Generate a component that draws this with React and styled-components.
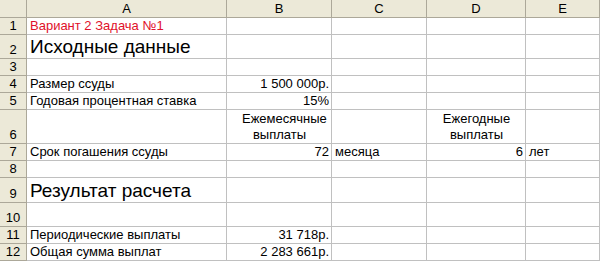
import styled, { createGlobalStyle } from "styled-components";

const GlobalStyle = createGlobalStyle`
  html, body {
    margin: 0;
    padding: 0;
    background: #ffffff;
  }
  body {
    font-family: "Liberation Sans", Arial, sans-serif;
    font-size: 13px;
    color: #000000;
  }
`;

const COLUMNS = ["A", "B", "C", "D", "E"];
const COL_WIDTHS = [200, 105, 95, 99, 74];
const ROW_HEIGHTS = [17, 24, 17, 17, 17, 34, 17, 17, 25, 24, 17, 17];

// cells keyed by "row:col"
const cells = {
  "1:A": { text: "Вариант 2 Задача №1", color: "#e0102a" },
  "2:A": { text: "Исходные данные", big: true },
  "4:A": { text: "Размер ссуды" },
  "4:B": { text: "1 500 000р.", align: "right" },
  "5:A": { text: "Годовая процентная ставка" },
  "5:B": { text: "15%", align: "right" },
  "6:B": { text: "Ежемесячные выплаты", align: "center", wrap: true },
  "6:D": { text: "Ежегодные выплаты", align: "center", wrap: true },
  "7:A": { text: "Срок погашения ссуды" },
  "7:B": { text: "72", align: "right" },
  "7:C": { text: "месяца" },
  "7:D": { text: "6", align: "right" },
  "7:E": { text: "лет" },
  "9:A": { text: "Результат расчета", big: true },
  "11:A": { text: "Периодические выплаты" },
  "11:B": { text: "31 718р.", align: "right" },
  "12:A": { text: "Общая сумма выплат" },
  "12:B": { text: "2 283 661р.", align: "right" },
};

const Sheet = styled.div`
  display: grid;
  grid-template-columns: 27px ${COL_WIDTHS.map((w) => `${w}px`).join(" ")};
  grid-template-rows: 18px ${ROW_HEIGHTS.map((h) => `${h}px`).join(" ")};
  width: 602px;
  height: 262px;
  overflow: hidden;
  background: #ffffff;
`;

const Corner = styled.div`
  background: #ece9d8;
  border-right: 1px solid #aca899;
  border-bottom: 1px solid #aca899;
  box-sizing: border-box;
`;

const HeaderCell = styled.div`
  box-sizing: border-box;
  background: #ece9d8;
  border-right: 1px solid #aca899;
  border-bottom: 1px solid #aca899;
  display: flex;
  align-items: flex-end;
  justify-content: center;
  padding-bottom: 0px;
  font-size: 13px;
  line-height: 16px;
  color: #000000;
`;

const RowHead = styled(HeaderCell)`
  border-right: 1px solid #aca899;
  padding-bottom: 0px;
`;

const Cell = styled.div`
  box-sizing: border-box;
  border-right: 1px solid #c0c0c0;
  border-bottom: 1px solid #c0c0c0;
  display: flex;
  align-items: flex-end;
  justify-content: ${(p) =>
    p.$align === "right" ? "flex-end" : p.$align === "center" ? "center" : "flex-start"};
  padding: 0 2px 0 3px;
  white-space: ${(p) => (p.$wrap ? "normal" : "nowrap")};
  overflow: visible;
  position: relative;
  z-index: ${(p) => (p.$filled ? 1 : 0)};
`;

const Text = styled.span`
  color: ${(p) => p.$color || "#000000"};
  font-size: ${(p) => (p.$big ? "19px" : "13px")};
  line-height: ${(p) => (p.$big ? "22px" : "16px")};
  text-align: ${(p) => p.$align || "left"};
  width: ${(p) => (p.$wrap ? "100%" : "auto")};
  padding: 0 ${(p) => (p.$wrap ? "12px" : "0")};
  box-sizing: border-box;
`;

function App() {
  return (
    <>
      <GlobalStyle />
      <Sheet>
        <Corner />
        {COLUMNS.map((c) => (
          <HeaderCell key={c}>{c}</HeaderCell>
        ))}
        {ROW_HEIGHTS.map((_, i) => {
          const row = i + 1;
          return [
            <RowHead key={`h${row}`}>{row}</RowHead>,
            ...COLUMNS.map((c) => {
              const cell = cells[`${row}:${c}`];
              return (
                <Cell
                  key={`${row}${c}`}
                  $align={cell?.align}
                  $wrap={cell?.wrap}
                  $filled={!!cell}
                >
                  {cell && (
                    <Text
                      $color={cell.color}
                      $big={cell.big}
                      $align={cell.align}
                      $wrap={cell.wrap}
                    >
                      {cell.text}
                    </Text>
                  )}
                </Cell>
              );
            }),
          ];
        })}
      </Sheet>
    </>
  );
}

export default App;
